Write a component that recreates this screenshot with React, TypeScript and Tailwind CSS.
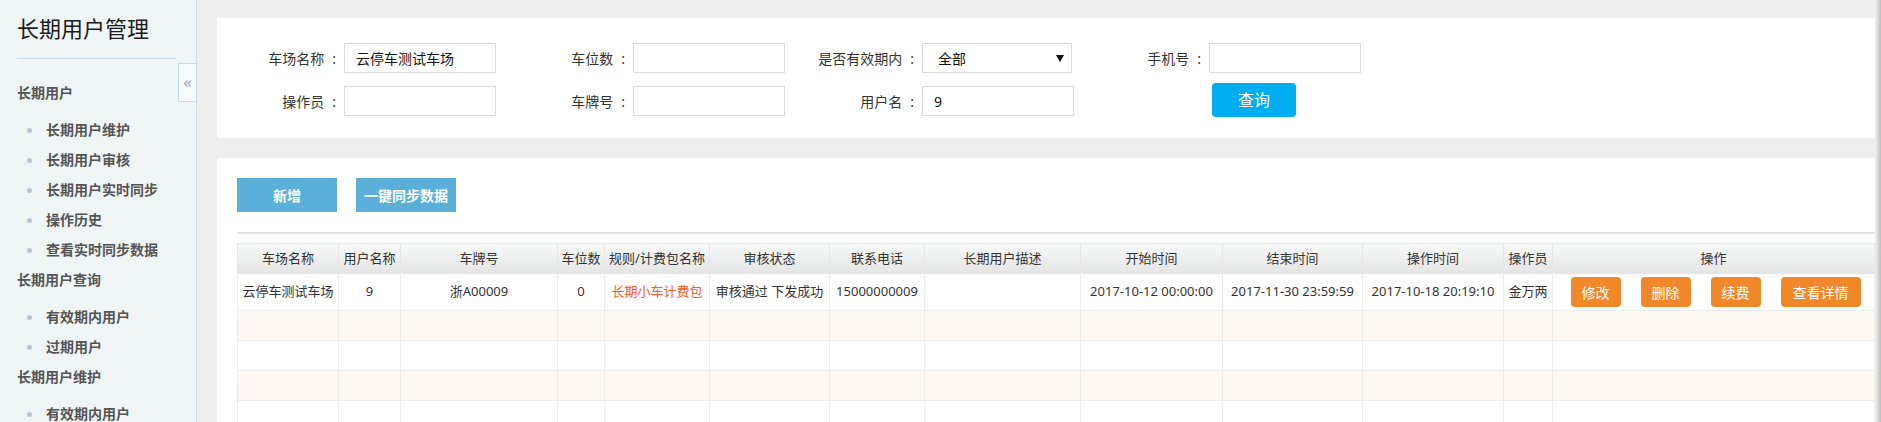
import React from "react"

const sections = [
  { title: "长期用户", items: ["长期用户维护", "长期用户审核", "长期用户实时同步", "操作历史", "查看实时同步数据"] },
  { title: "长期用户查询", items: ["有效期内用户", "过期用户"] },
  { title: "长期用户维护", items: ["有效期内用户"] },
]

const columns = [
  { label: "车场名称", w: "w-[101px]" },
  { label: "用户名称", w: "w-[62px]" },
  { label: "车牌号", w: "w-[157px]" },
  { label: "车位数", w: "w-[47px]" },
  { label: "规则/计费包名称", w: "w-[105px]" },
  { label: "审核状态", w: "w-[120px]" },
  { label: "联系电话", w: "w-[95px]" },
  { label: "长期用户描述", w: "w-[156px]" },
  { label: "开始时间", w: "w-[142px]" },
  { label: "结束时间", w: "w-[140px]" },
  { label: "操作时间", w: "w-[141px]" },
  { label: "操作员", w: "w-[49px]" },
  { label: "操作", w: "w-auto" },
]

function Label({ text }: { text: string }) {
  return (
    <div className="flex h-[30px] items-center justify-end text-[14px] text-[#333]">
      {text}
      <span className="ml-[8px] mr-[8px]">:</span>
    </div>
  )
}

function Field({ value }: { value?: string }) {
  return (
    <div className="flex h-[30px] w-[152px] items-center border border-[#d9d9d9] px-[11px] text-[14px] text-[#111]">
      {value}
    </div>
  )
}

function Sidebar() {
  return (
    <aside className="relative w-[197px] shrink-0 border-r border-[#cfe0ea] bg-[#eff4f5]">
      <h1 className="pl-[17px] pt-[13px] text-[22px] leading-[30px] text-[#1c1c1c]">长期用户管理</h1>
      <div className="ml-[17px] mt-[15px] h-px w-[159px] bg-[#c9dcea]" />
      <nav className="mt-[19px]">
        {sections.map((s) => (
          <div key={s.title}>
            <div className="pl-[17px] text-[14px] font-semibold leading-[30px] text-[#555]">{s.title}</div>
            <ul className="pt-[7px]">
              {s.items.map((it) => (
                <li key={it} className="flex items-center gap-[14px] pl-[27px] text-[14px] font-semibold leading-[30px] text-[#555]">
                  <span className="h-[5px] w-[5px] rounded-full bg-[#bcc3cf]" />
                  {it}
                </li>
              ))}
            </ul>
          </div>
        ))}
      </nav>
      <div className="absolute left-[178px] top-[63px] flex h-[39px] w-[19px] items-center justify-center border border-[#c5dcec] bg-[#f6fbfd] pb-[2px] text-[17px] text-[#9aa6b3]">
        «
      </div>
    </aside>
  )
}

function SearchPanel() {
  return (
    <div className="h-[120px] bg-white pt-[25px]">
      <div className="grid grid-cols-[127px_152px_137px_152px_137px_150px_137px_152px] gap-y-[13px]">
        <Label text="车场名称" />
        <Field value="云停车测试车场" />
        <Label text="车位数" />
        <Field />
        <Label text="是否有效期内" />
        <div className="flex h-[30px] w-[150px] items-center justify-between border border-[#d9d9d9] pl-[15px] pr-[7px] text-[14px] text-[#111]">
          全部
          <svg width="8" height="8" viewBox="0 0 8 8">
            <path d="M0 1h8L4 8z" fill="#111" />
          </svg>
        </div>
        <Label text="手机号" />
        <Field />
        <Label text="操作员" />
        <Field />
        <Label text="车牌号" />
        <Field />
        <Label text="用户名" />
        <Field value="9" />
        <div />
        <button className="-mt-[3px] ml-[3px] h-[34px] w-[84px] rounded-[4px] bg-[#00adef] text-[16px] text-white">
          查询
        </button>
      </div>
    </div>
  )
}

function OrangeBtn({ text, w }: { text: string; w: string }) {
  return (
    <button className={`h-[30px] ${w} rounded-[4px] bg-[#f0882a] text-[14px] text-white`}>{text}</button>
  )
}

function DataTable() {
  const rows = [0, 1, 2, 3, 4]
  return (
    <table className="w-full table-fixed border-collapse text-[13px] text-[#333]">
      <colgroup>
        {columns.map((c) => (
          <col key={c.label} className={c.w} />
        ))}
      </colgroup>
      <thead>
        <tr className="h-[30px] bg-linear-to-b from-[#f7f8f8] to-[#e4e4e4]">
          {columns.map((c) => (
            <th key={c.label} className="border border-[#e6e6e6] px-0 text-center font-normal whitespace-nowrap">
              {c.label}
            </th>
          ))}
        </tr>
      </thead>
      <tbody>
        <tr className="h-[37px] bg-white">
          <td className="border border-[#ececec] text-center whitespace-nowrap">云停车测试车场</td>
          <td className="border border-[#ececec] text-center">9</td>
          <td className="border border-[#ececec] text-center">浙A00009</td>
          <td className="border border-[#ececec] text-center">0</td>
          <td className="border border-[#ececec] text-center whitespace-nowrap text-[#ff5b22]">长期小车计费包</td>
          <td className="border border-[#ececec] text-center whitespace-nowrap">审核通过 下发成功</td>
          <td className="border border-[#ececec] text-center">15000000009</td>
          <td className="border border-[#ececec]" />
          <td className="border border-[#ececec] text-center whitespace-nowrap">2017-10-12 00:00:00</td>
          <td className="border border-[#ececec] text-center whitespace-nowrap">2017-11-30 23:59:59</td>
          <td className="border border-[#ececec] text-center whitespace-nowrap">2017-10-18 20:19:10</td>
          <td className="border border-[#ececec] text-center whitespace-nowrap">金万两</td>
          <td className="border border-[#ececec]">
            <div className="flex justify-center gap-[20px] pl-[4px]">
              <OrangeBtn text="修改" w="w-[50px]" />
              <OrangeBtn text="删除" w="w-[50px]" />
              <OrangeBtn text="续费" w="w-[50px]" />
              <OrangeBtn text="查看详情" w="w-[80px]" />
            </div>
          </td>
        </tr>
        {rows.slice(1).map((r) => (
          <tr key={r} className={`h-[30px] ${r % 2 === 1 ? "bg-[#fdf8f2]" : "bg-white"}`}>
            {columns.map((c) => (
              <td key={c.label} className="border border-[#ececec]" />
            ))}
          </tr>
        ))}
      </tbody>
    </table>
  )
}

export default function App() {
  return (
    <div className="flex h-[422px] w-[1881px] overflow-hidden bg-[#eeeeee] font-['Noto_Sans','Noto_Sans_CJK_SC',sans-serif]">
      <Sidebar />
      <main className="min-w-0 flex-1 pl-[20px] pt-[18px]">
        <SearchPanel />
        <div className="mt-[20px] bg-white pl-[20px] pt-[20px]">
          <div className="flex gap-[19px]">
            <button className="h-[34px] w-[100px] bg-[#5bb0d9] text-[14px] font-semibold text-white">新增</button>
            <button className="h-[34px] w-[100px] bg-[#5bb0d9] text-[14px] font-semibold text-white">一键同步数据</button>
          </div>
          <div className="mt-[20px] h-[2px] bg-[#e3e3e3]" />
          <div className="mt-[9px]">
            <DataTable />
          </div>
        </div>
      </main>
      <div className="w-[6px] shrink-0 bg-linear-to-r from-[#f2f2f2] to-[#bdbdbd]" />
    </div>
  )
}
